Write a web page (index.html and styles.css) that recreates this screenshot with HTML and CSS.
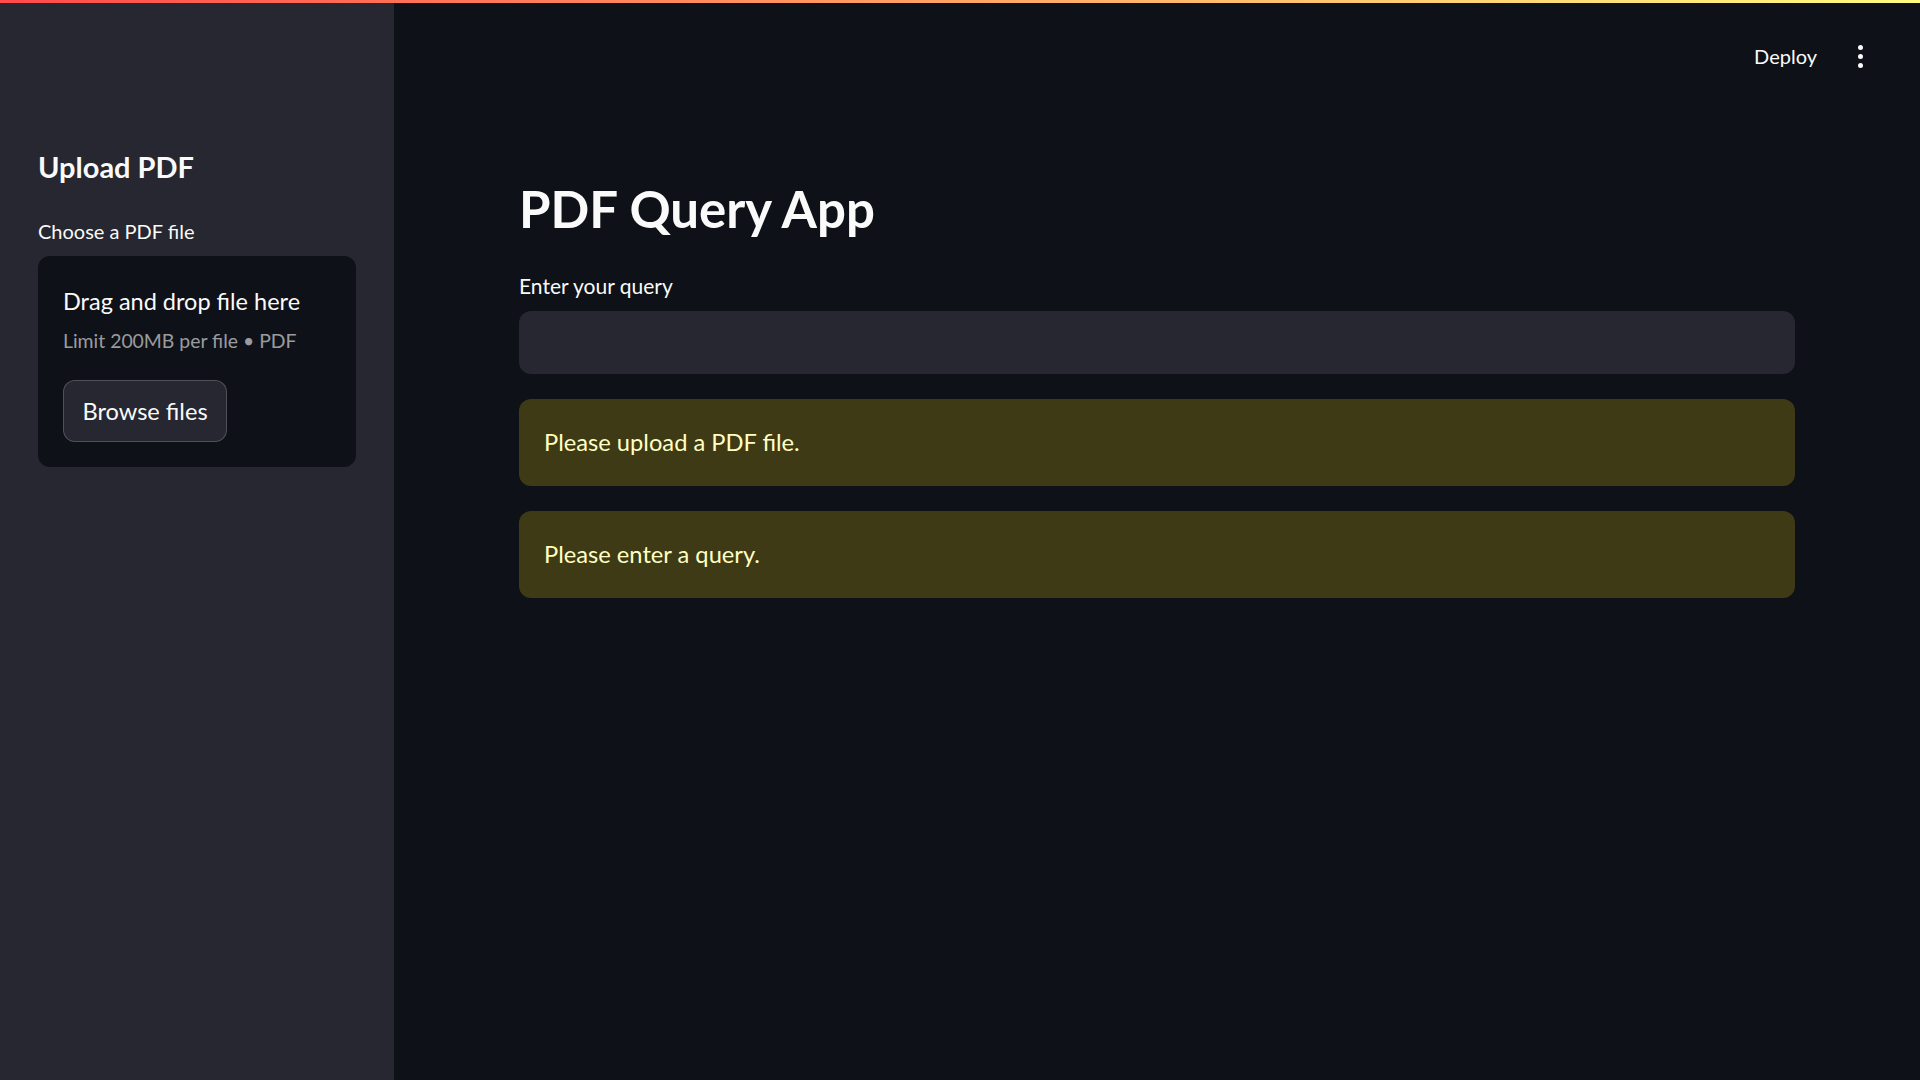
FILE: index.html
```html
<!DOCTYPE html>
<html lang="en">
<head>
<meta charset="utf-8">
<title>PDF Query App</title>
<link rel="stylesheet" href="styles.css">
</head>
<body>
<div class="decoration"></div>
<div class="app">
  <aside class="sidebar">
    <h2 class="side-title">Upload PDF</h2>
    <div class="widget-label">Choose a PDF file</div>
    <section class="dropzone">
      <div class="dz-title">Drag and drop file here</div>
      <div class="dz-sub">Limit 200MB per file • PDF</div>
      <button class="browse">Browse files</button>
    </section>
  </aside>
  <main class="main">
    <header class="toolbar">
      <span class="deploy">Deploy</span>
      <span class="menu"><i></i><i></i><i></i></span>
    </header>
    <div class="block">
      <h1 class="title">PDF Query App</h1>
      <div class="widget-label">Enter your query</div>
      <div class="text-input"></div>
      <div class="alert">Please upload a PDF file.</div>
      <div class="alert">Please enter a query.</div>
    </div>
  </main>
</div>
</body>
</html>
```
FILE: styles.css
```css
* { box-sizing: border-box; }
html, body { margin: 0; padding: 0; height: 100%; }
body {
  background: #0e1117;
  color: #fafafa;
  font-family: "Lato", "Open Sans", sans-serif;
  display: flex;
  flex-direction: column;
  overflow: hidden;
}
.decoration {
  height: 3px;
  flex: 0 0 3px;
  background: linear-gradient(90deg, rgb(255, 75, 75), rgb(255, 253, 128));
}
.app {
  flex: 1;
  display: flex;
  min-height: 0;
}
.sidebar {
  width: 394px;
  flex: 0 0 394px;
  background: #262730;
  padding: 147px 38px 0 38px;
  display: flex;
  flex-direction: column;
}
.side-title {
  margin: 0;
  font-size: 29px;
  line-height: 34px;
  font-weight: 700;
  color: #fafafa;
}
.widget-label {
  font-size: 20px;
  line-height: 24px;
  color: #fafafa;
}
.sidebar .widget-label { margin-top: 35px; }
.dropzone {
  margin-top: 13px;
  background: #0e1117;
  border-radius: 12px;
  padding: 31px 25px 25px 25px;
  display: flex;
  flex-direction: column;
  align-items: flex-start;
}
.dz-title {
  font-size: 23.5px;
  line-height: 28px;
  color: #fafafa;
}
.dz-sub {
  margin-top: 14px;
  font-size: 19.4px;
  line-height: 24px;
  color: rgba(250, 250, 250, 0.6);
}
.browse {
  margin-top: 27px;
  width: 164px;
  height: 62px;
  background: #262730;
  border: 1px solid rgba(250, 250, 250, 0.2);
  border-radius: 12px;
  color: #fafafa;
  font-family: inherit;
  font-size: 23.6px;
  padding: 0;
  cursor: pointer;
}
.main {
  flex: 1;
  display: flex;
  flex-direction: column;
  min-width: 0;
}
.toolbar {
  height: 106px;
  flex: 0 0 106px;
  display: flex;
  align-items: center;
  justify-content: flex-end;
  padding-right: 57px;
}
.deploy {
  font-size: 20px;
  line-height: 24px;
  color: #fafafa;
  margin-right: 41px;
}
.menu {
  display: flex;
  flex-direction: column;
  gap: 4px;
  padding-top: 1px;
}
.menu i {
  display: block;
  width: 5px;
  height: 5px;
  border-radius: 50%;
  background: #fafafa;
}
.block {
  width: 1276px;
  margin: 0 auto;
  padding-top: 70px;
  display: flex;
  flex-direction: column;
}
.title {
  margin: 0;
  font-size: 51px;
  line-height: 60px;
  font-weight: 700;
  color: #fafafa;
}
.block .widget-label {
  margin-top: 35px;
  font-size: 21px;
  line-height: 24px;
}
.text-input {
  margin-top: 13px;
  height: 63px;
  background: #262730;
  border-radius: 12px;
}
.alert {
  margin-top: 25px;
  height: 87px;
  padding: 25px 25px;
  background: rgba(255, 227, 18, 0.2);
  color: #ffffc2;
  border-radius: 12px;
  font-size: 23.7px;
  line-height: 36px;
}
```
